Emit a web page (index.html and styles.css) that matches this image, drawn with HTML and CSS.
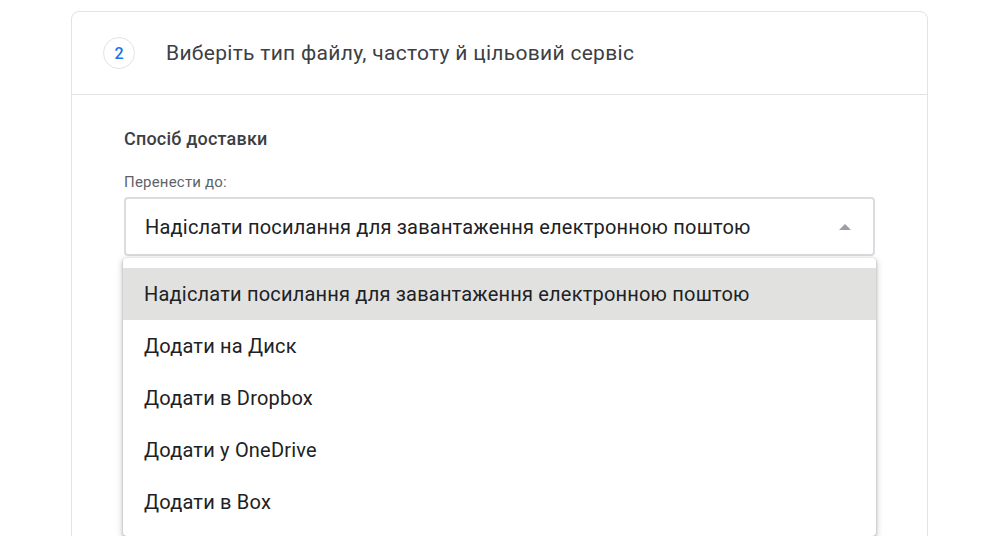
FILE: index.html
```html
<!DOCTYPE html>
<html>
<head>
  <title>Вибір типу файлу</title>
  <link rel="stylesheet" href="styles.css">
</head>
<body>
  <div class="card">
    <div class="card-header">
      <span class="step">2</span>
      <h1>Виберіть тип файлу, частоту й цільовий сервіс</h1>
    </div>
    <div class="card-body">
      <h2>Спосіб доставки</h2>
      <div class="field-label">Перенести до:</div>
      <div class="select-wrap">
        <div class="select">
          <span>Надіслати посилання для завантаження електронною поштою</span>
          <span class="arrow"></span>
        </div>
        <ul class="menu">
          <li class="selected">Надіслати посилання для завантаження електронною поштою</li>
          <li>Додати на Диск</li>
          <li>Додати в Dropbox</li>
          <li>Додати у OneDrive</li>
          <li>Додати в Box</li>
        </ul>
      </div>
    </div>
  </div>
</body>
</html>
```

FILE: styles.css
```css
body {
  margin: 0;
  font-family: Roboto, "Noto Sans", sans-serif;
  color: #202124;
  background: #fff;
  overflow: hidden;
  height: 536px;
}

.card {
  margin: 11px 0 0 71px;
  width: 855px;
  height: 600px;
  border: 1px solid #e3e3e3;
  border-radius: 8px;
}

.card-header {
  display: flex;
  align-items: center;
  height: 82px;
  padding-left: 31px;
  border-bottom: 1px solid #e3e3e3;
}

.step {
  width: 30px;
  height: 30px;
  border: 1px solid #dfe3ea;
  border-radius: 50%;
  display: flex;
  align-items: center;
  justify-content: center;
  color: #1a73e8;
  font-size: 16px;
  font-weight: 500;
  margin-right: 31px;
}

h1 {
  margin: 0;
  font-size: 21px;
  font-weight: 400;
  letter-spacing: 0.3px;
  color: #3c4043;
}

.card-body {
  padding: 32px 0 0 52px;
}

h2 {
  margin: 0;
  font-size: 18px;
  font-weight: 500;
  letter-spacing: 0.2px;
  color: #3c4043;
  line-height: 24px;
}

.field-label {
  margin-top: 22px;
  font-size: 15px;
  letter-spacing: 0.2px;
  color: #5f6368;
  line-height: 18px;
}

.select-wrap {
  position: relative;
  margin-top: 6px;
  width: 751px;
}

.select {
  box-sizing: border-box;
  height: 59px;
  border: 2px solid #dadce0;
  border-radius: 4px;
  display: flex;
  align-items: center;
  justify-content: space-between;
  padding: 0 22px 0 19px;
  font-size: 20px;
  letter-spacing: 0.2px;
  color: #202124;
}

.arrow {
  width: 0;
  height: 0;
  border-left: 6px solid transparent;
  border-right: 6px solid transparent;
  border-bottom: 6px solid #9aa0a6;
}

.menu {
  position: absolute;
  top: 61px;
  left: -1px;
  width: 753px;
  margin: 0;
  padding: 10px 0 8px;
  list-style: none;
  background: #fff;
  border-radius: 4px;
  box-shadow: 0 1px 3px rgba(0, 0, 0, 0.3), 0 2px 6px 2px rgba(0, 0, 0, 0.12);
}

.menu li {
  height: 52px;
  line-height: 52px;
  padding-left: 21px;
  font-size: 20px;
  letter-spacing: 0.2px;
  color: #202124;
}

.menu li.selected {
  background: #e1e2e0;
}
```
